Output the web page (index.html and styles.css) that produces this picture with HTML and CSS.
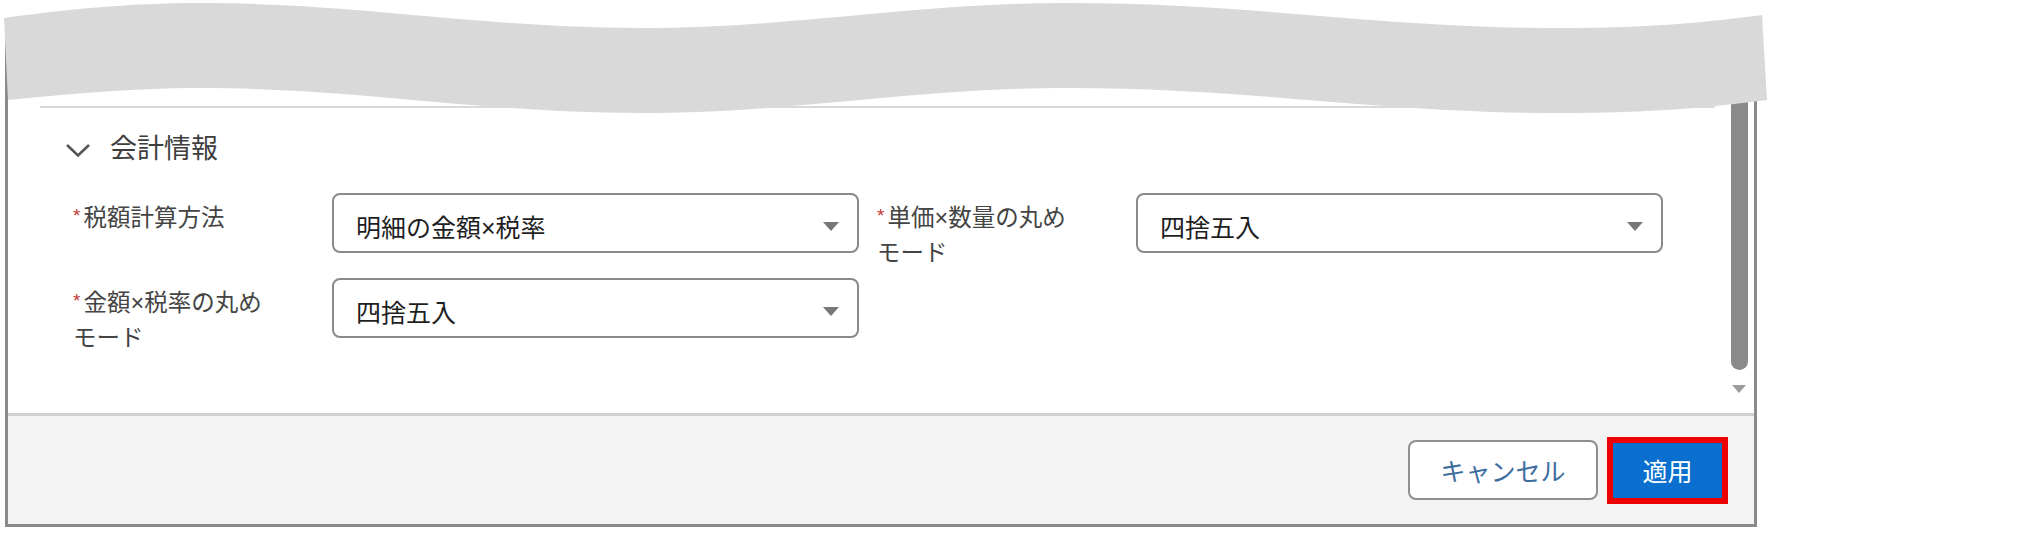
FILE: index.html
```html
<!DOCTYPE html>
<html lang="ja">
<head>
<meta charset="utf-8">
<title>会計情報</title>
<link rel="stylesheet" href="styles.css">
</head>
<body>
<div class="stage">
  <div class="dialog">
    <div class="dialog-body">
      <div class="content">
        <div class="divider"></div>
        <div class="section-head">
          <svg class="chevron" width="26" height="15" viewBox="0 0 26 15"><polyline points="2,2 13,12.5 24,2" fill="none" stroke="#555" stroke-width="2.6"/></svg>
          <span class="section-title">会計情報</span>
        </div>
        <div class="form-grid">
          <div class="field">
            <div class="field-label"><abbr class="req">*</abbr>税額計算方法</div>
            <div class="select"><span class="select-value">明細の金額×税率</span><svg class="select-arrow" width="16" height="9" viewBox="0 0 16 9"><polygon points="0,0 16,0 8,9" fill="#777"/></svg></div>
          </div>
          <div class="field">
            <div class="field-label"><abbr class="req">*</abbr>単価×数量の丸め<br>モード</div>
            <div class="select"><span class="select-value">四捨五入</span><svg class="select-arrow" width="16" height="9" viewBox="0 0 16 9"><polygon points="0,0 16,0 8,9" fill="#777"/></svg></div>
          </div>
          <div class="field">
            <div class="field-label"><abbr class="req">*</abbr>金額×税率の丸め<br>モード</div>
            <div class="select"><span class="select-value">四捨五入</span><svg class="select-arrow" width="16" height="9" viewBox="0 0 16 9"><polygon points="0,0 16,0 8,9" fill="#777"/></svg></div>
          </div>
        </div>
      </div>
      <div class="scrollbar">
        <div class="thumb"></div>
        <svg class="scroll-arrow" width="14" height="8" viewBox="0 0 14 8"><polygon points="0,0 14,0 7,8" fill="#9c9c9c"/></svg>
      </div>
    </div>
    <div class="footer">
      <button class="btn btn-neutral">キャンセル</button>
      <button class="btn btn-brand">適用</button>
    </div>
  </div>
  <svg class="torn" width="1780" height="130" viewBox="0 0 1780 130"><path d="M4,18 C60,10 130,3 200,3 C360,3 480,28 640,28 C800,28 910,3 1070,3 C1250,3 1380,28 1560,28 C1650,28 1710,22 1762,15 L1767,100 C1715,107 1650,113 1560,113 C1380,113 1250,88 1070,88 C910,88 800,113 640,113 C480,113 360,88 200,88 C130,88 60,95 8,100 Z" fill="#d9d9d9"/></svg>
</div>
</body>
</html>
```

FILE: styles.css
```css
* { box-sizing: border-box; }

html, body {
  margin: 0;
  padding: 0;
  background: #ffffff;
}

body {
  font-family: "Liberation Sans", "Noto Sans CJK JP", sans-serif;
  color: #3e3e3e;
}

.stage {
  position: relative;
  width: 2027px;
  height: 534px;
  overflow: hidden;
  padding-top: 40px;
  padding-left: 5px;
}

.dialog {
  width: 1752px;
  height: 487px;
  border: 3px solid #8a8a8a;
  display: flex;
  flex-direction: column;
  background: #ffffff;
}

.dialog-body {
  flex: 1;
  display: flex;
  min-height: 0;
}

.content {
  flex: 1;
  padding-top: 63px;
}

.divider {
  height: 2px;
  background: #d9d9d9;
  margin-left: 32px;
  margin-right: 14px;
}

.section-head {
  display: flex;
  align-items: center;
  height: 36px;
  margin-top: 23px;
  padding-left: 57px;
  gap: 19px;
}

.chevron {
  display: block;
  margin-top: 2px;
}

.section-title {
  font-size: 27px;
  color: #3e3e3e;
  line-height: 36px;
}

.form-grid {
  margin-top: 26px;
  padding-left: 65px;
  display: grid;
  grid-template-columns: 786px 786px;
  grid-auto-rows: 60px;
  column-gap: 18px;
  row-gap: 25px;
}

.field {
  display: flex;
  align-items: flex-start;
  height: 60px;
}

.field-label {
  width: 259px;
  flex: none;
  padding-top: 8px;
  font-size: 23.5px;
  line-height: 35px;
  color: #444444;
  white-space: nowrap;
}

.req {
  color: #c23934;
  text-decoration: none;
  font-size: 19px;
  margin-right: 3px;
  vertical-align: top;
  line-height: 30px;
}

.select {
  width: 527px;
  height: 60px;
  border: 2px solid #8a8a8a;
  border-radius: 8px;
  display: flex;
  align-items: center;
  justify-content: space-between;
  padding: 6px 18px 0 22px;
  background: #ffffff;
}

.select-value {
  font-size: 25px;
  color: #1f1f1f;
}

.select-arrow {
  display: block;
}

.scrollbar {
  width: 25px;
  flex: none;
  display: flex;
  flex-direction: column;
  align-items: center;
  padding-right: 5px;
}

.thumb {
  width: 17px;
  height: 327px;
  background: #8a8a8a;
  border-radius: 0 0 9px 9px;
}

.scroll-arrow {
  display: block;
  margin-top: 15px;
}

.footer {
  height: 111px;
  flex: none;
  border-top: 3px solid #d0d0d0;
  background: #f3f3f3;
  display: flex;
  align-items: center;
  justify-content: flex-end;
  gap: 9px;
  padding-right: 26px;
}

.btn {
  font-family: "Liberation Sans", "Noto Sans CJK JP", sans-serif;
  font-size: 25px;
  cursor: pointer;
  display: flex;
  align-items: center;
  justify-content: center;
}

.btn-neutral {
  width: 190px;
  height: 60px;
  background: #ffffff;
  border: 2px solid #8e8e8e;
  border-radius: 8px;
  color: #3d6c9f;
}

.btn-brand {
  width: 121px;
  height: 67px;
  background: #0a6fcf;
  border: 6px solid #ee0000;
  border-radius: 0;
  color: #ffffff;
}

.torn {
  position: absolute;
  left: 0;
  top: 0;
}
```
